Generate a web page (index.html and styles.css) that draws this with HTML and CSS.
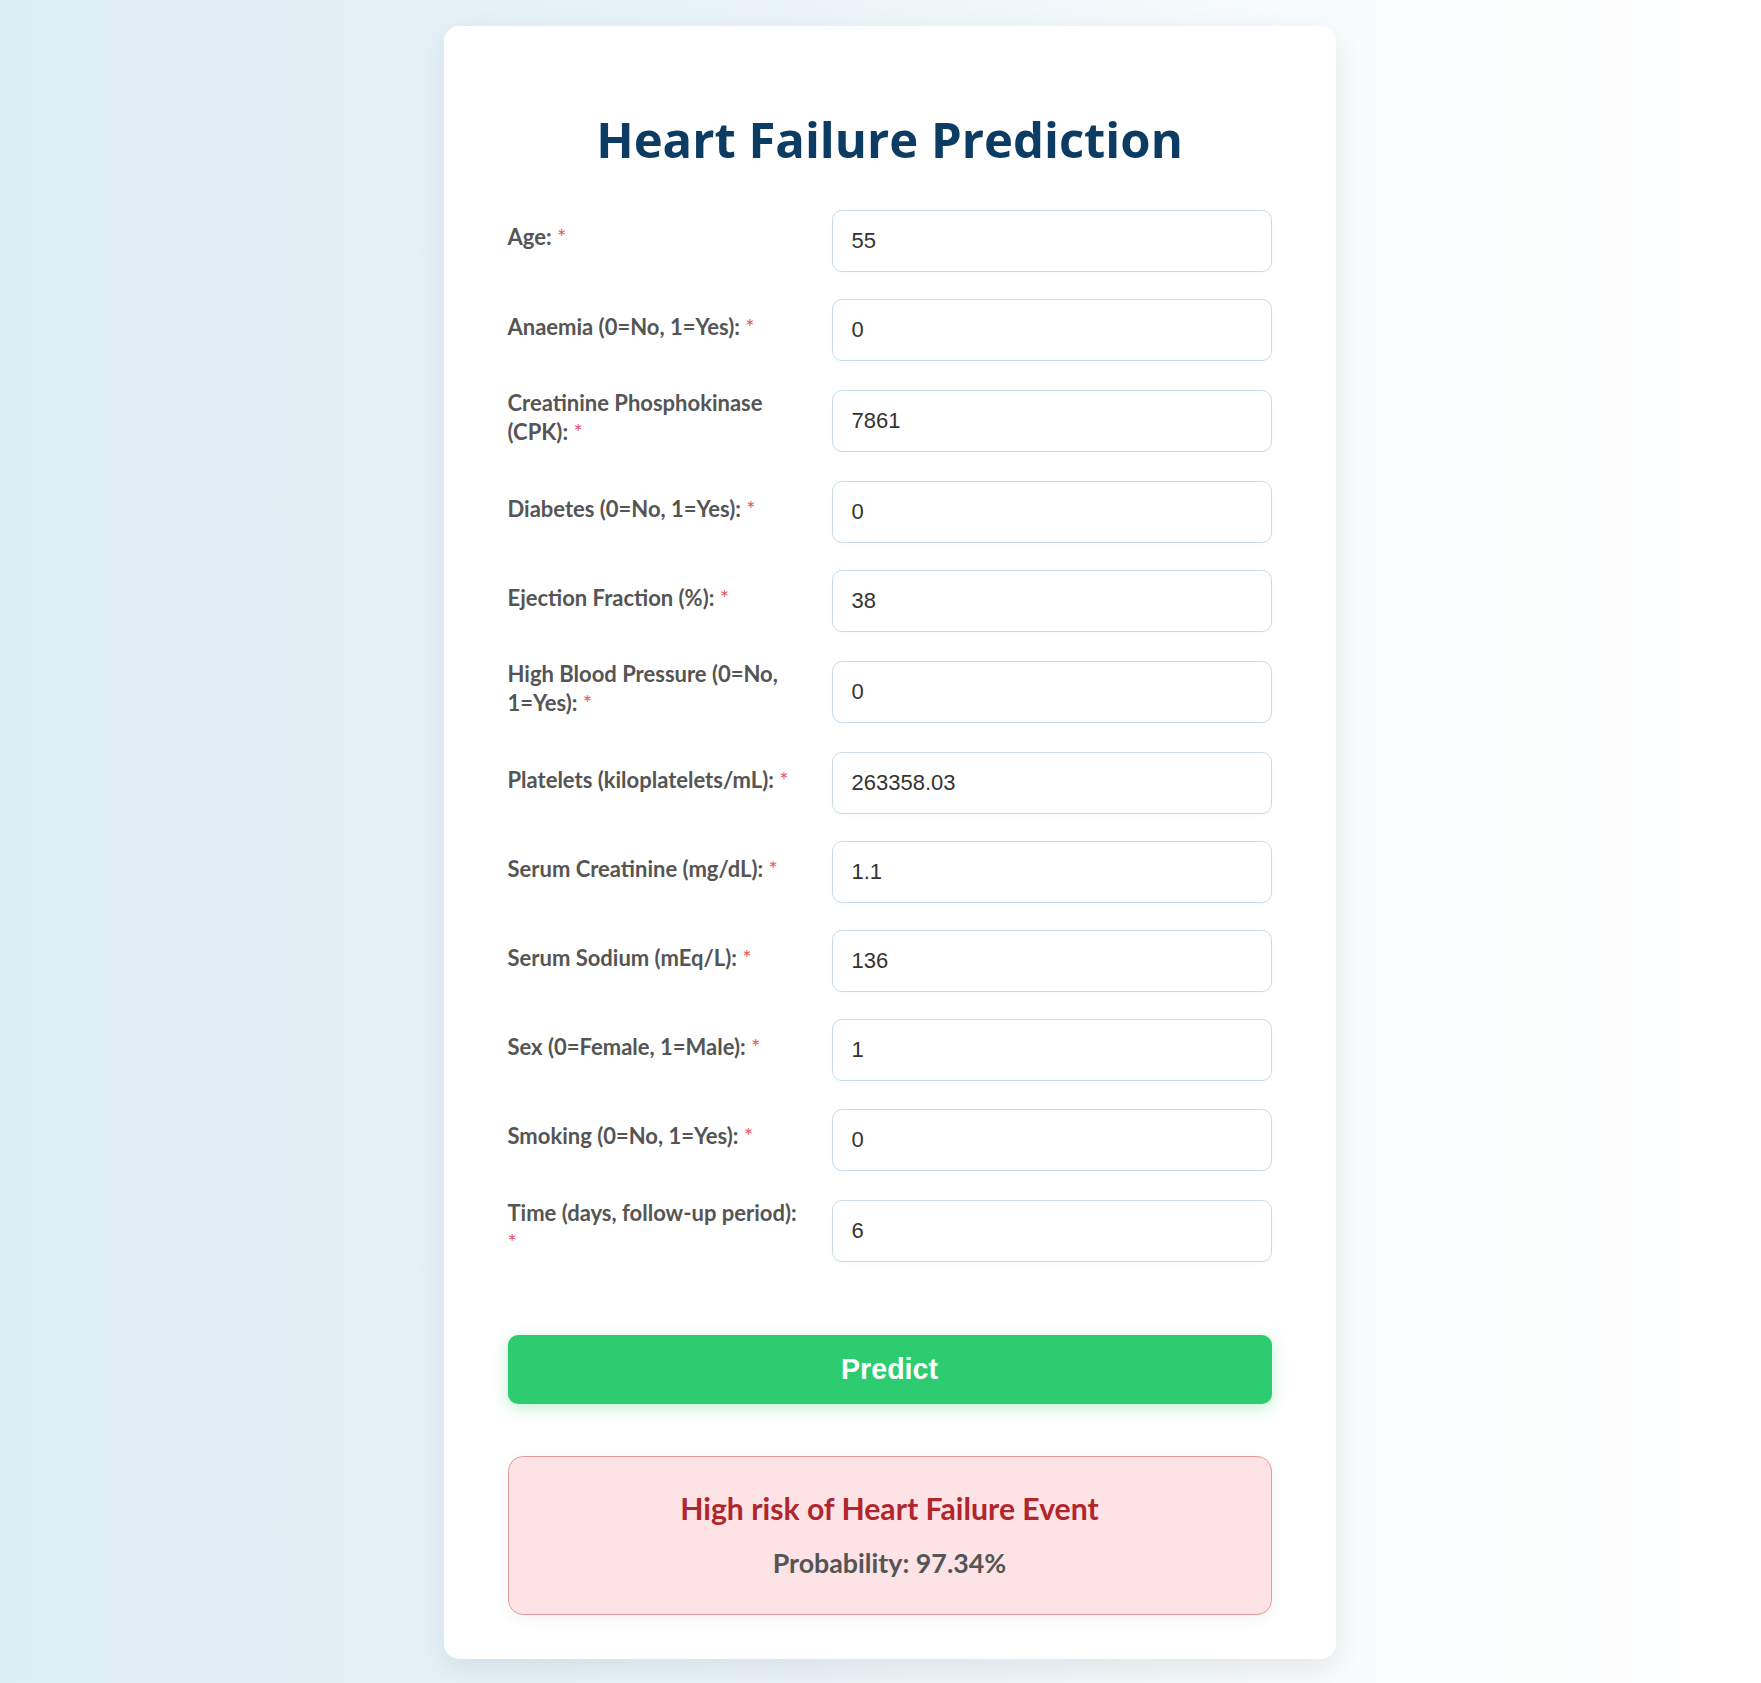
FILE: index.html
```html
<!DOCTYPE html>
<html lang="en">
<head>
<meta charset="utf-8">
<title>Heart Failure Prediction</title>
<link rel="stylesheet" href="styles.css">
</head>
<body>
<main class="card">
  <h1 class="title">Heart Failure Prediction</h1>
  <form class="form">
    <div class="row">
      <label class="label" for="age">Age: <span class="req">*</span></label>
      <input class="field" id="age" type="text" value="55">
    </div>
    <div class="row">
      <label class="label" for="anaemia">Anaemia (0=No, 1=Yes): <span class="req">*</span></label>
      <input class="field" id="anaemia" type="text" value="0">
    </div>
    <div class="row">
      <label class="label" for="cpk">Creatinine Phosphokinase (CPK): <span class="req">*</span></label>
      <input class="field" id="cpk" type="text" value="7861">
    </div>
    <div class="row">
      <label class="label" for="diabetes">Diabetes (0=No, 1=Yes): <span class="req">*</span></label>
      <input class="field" id="diabetes" type="text" value="0">
    </div>
    <div class="row">
      <label class="label" for="ef">Ejection Fraction (%): <span class="req">*</span></label>
      <input class="field" id="ef" type="text" value="38">
    </div>
    <div class="row">
      <label class="label" for="hbp">High Blood Pressure (0=No, 1=Yes): <span class="req">*</span></label>
      <input class="field" id="hbp" type="text" value="0">
    </div>
    <div class="row">
      <label class="label" for="platelets">Platelets (kiloplatelets/mL): <span class="req">*</span></label>
      <input class="field" id="platelets" type="text" value="263358.03">
    </div>
    <div class="row">
      <label class="label" for="sc">Serum Creatinine (mg/dL): <span class="req">*</span></label>
      <input class="field" id="sc" type="text" value="1.1">
    </div>
    <div class="row">
      <label class="label" for="ss">Serum Sodium (mEq/L): <span class="req">*</span></label>
      <input class="field" id="ss" type="text" value="136">
    </div>
    <div class="row">
      <label class="label" for="sex">Sex (0=Female, 1=Male): <span class="req">*</span></label>
      <input class="field" id="sex" type="text" value="1">
    </div>
    <div class="row">
      <label class="label" for="smoking">Smoking (0=No, 1=Yes): <span class="req">*</span></label>
      <input class="field" id="smoking" type="text" value="0">
    </div>
    <div class="row">
      <label class="label" for="time">Time (days, follow-up period): <span class="req">*</span></label>
      <input class="field" id="time" type="text" value="6">
    </div>
    <button class="btn" type="button">Predict</button>
  </form>
  <div class="result">
    <h2 class="result-title">High risk of Heart Failure Event</h2>
    <p class="result-prob">Probability: 97.34%</p>
  </div>
</main>
</body>
</html>
```

FILE: styles.css
```css
* { box-sizing: border-box; }

body {
  margin: 0;
  padding: 26px 0 25px 18px;
  min-height: 100vh;
  background: linear-gradient(90deg, #dcedf4 0%, #eaf4f8 45%, #fafcfd 80%, #ffffff 100%);
  font-family: "Lato", "Open Sans", sans-serif;
}

.card {
  width: 892px;
  margin: 0 auto;
  background: #ffffff;
  border-radius: 15px;
  padding: 44px 64px;
  box-shadow: 0 10px 30px rgba(0, 0, 0, 0.08);
}

.title {
  margin: 40px 0 41px;
  text-align: center;
  font-family: "Open Sans", "Noto Sans", sans-serif;
  font-size: 49px;
  line-height: 58.5px;
  font-weight: 700;
  color: #0c3c63;
}

.form {
  display: flex;
  flex-direction: column;
}

.row {
  display: flex;
  align-items: center;
  gap: 26px;
  margin-bottom: 27.2px;
}

.label {
  flex: 0 0 298px;
  font-size: 22px;
  line-height: 29.3px;
  font-weight: 700;
  color: #555555;
  margin-bottom: 7px;
}

.req {
  color: #e35b5b;
  font-weight: 400;
}

.field {
  flex: 1;
  height: 62px;
  padding: 0 19px;
  border: 1px solid #c8dce6;
  border-radius: 10px;
  font-family: "Liberation Sans", Arial, sans-serif;
  font-size: 22px;
  color: #333333;
  background: #ffffff;
  box-shadow: 0 2px 4px rgba(0, 0, 0, 0.02);
}

.btn {
  margin-top: 44px;
  height: 69px;
  border: none;
  border-radius: 10px;
  background: #2ecc71;
  color: #ffffff;
  font-family: "Liberation Sans", Arial, sans-serif;
  font-weight: 700;
  font-size: 28.6px;
  box-shadow: 0 4px 15px rgba(46, 204, 113, 0.3);
}

.result {
  margin-top: 52.7px;
  height: 159px;
  background: #fde3e5;
  border: 1px solid #e39b9b;
  border-radius: 15px;
  text-align: center;
  padding-top: 33px;
  box-shadow: 0 4px 15px rgba(0, 0, 0, 0.05);
}

.result-title {
  margin: 0;
  font-size: 30.2px;
  line-height: 36px;
  font-weight: 700;
  color: #b0262c;
}

.result-prob {
  margin: 21px 0 0;
  font-size: 26.8px;
  line-height: 32px;
  font-weight: 700;
  color: #555555;
}
```
